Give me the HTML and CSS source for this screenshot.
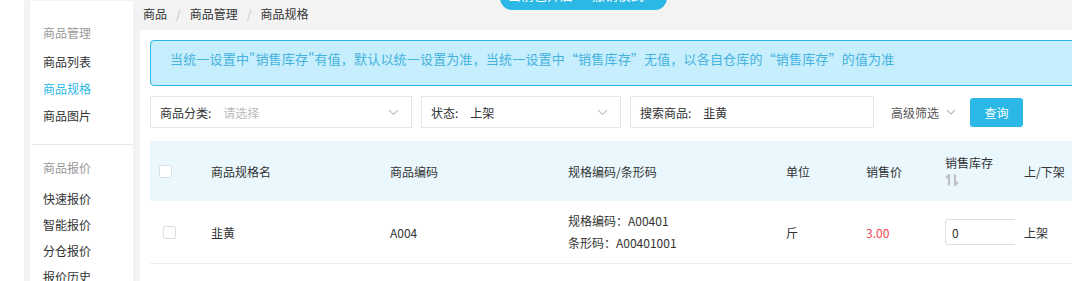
FILE: index.html
```html
<!DOCTYPE html>
<html lang="zh-CN">

<head>
    <meta charset="UTF-8">
    <meta name="viewport" content="width=device-width, initial-scale=1.0">
    <title>商品规格</title>
    <link rel="stylesheet" href="styles.css">
</head>

<body>

    <div class="toast">当前已开启 · 撤销模式</div>

    <div class="layout">
        <div class="rail"></div>

        <div class="sidebar">
            <div class="menu-group first">
                <div class="menu-title">商品管理</div>
                <a href="#" class="menu-item">商品列表</a>
                <a href="#" class="menu-item active">商品规格</a>
                <a href="#" class="menu-item">商品图片</a>
            </div>
            <div class="menu-group second">
                <div class="menu-title">商品报价</div>
                <a href="#" class="menu-item">快速报价</a>
                <a href="#" class="menu-item">智能报价</a>
                <a href="#" class="menu-item">分仓报价</a>
                <a href="#" class="menu-item">报价历史</a>
            </div>
        </div>

        <div class="main">
            <div class="breadcrumb">
                <span>商品</span><span class="sep">/</span><span>商品管理</span><span class="sep">/</span><span>商品规格</span>
            </div>

            <div class="panel">
                <div class="alert">当统一设置中"销售库存"有值，默认以统一设置为准，当统一设置中“销售库存”无值，以各自仓库的“销售库存”的值为准</div>

                <div class="filters">
                    <div class="field w-cat">
                        <span class="label">商品分类:</span>
                        <span class="placeholder">请选择</span>
                        <svg class="chevron" width="11" height="7" viewBox="0 0 11 7"><path d="M1 1l4.5 4.5L10 1" fill="none" stroke="#c0c4cc" stroke-width="1.1"/></svg>
                    </div>
                    <div class="field w-status">
                        <span class="label">状态:</span>
                        <span class="value">上架</span>
                        <svg class="chevron" width="11" height="7" viewBox="0 0 11 7"><path d="M1 1l4.5 4.5L10 1" fill="none" stroke="#c0c4cc" stroke-width="1.1"/></svg>
                    </div>
                    <div class="field w-search">
                        <span class="label">搜索商品:</span>
                        <span class="value">韭黄</span>
                    </div>
                    <div class="advanced">
                        高级筛选
                        <svg width="10" height="6" viewBox="0 0 10 6"><path d="M1 1l4 4 4-4" fill="none" stroke="#b4b8bf" stroke-width="1.1"/></svg>
                    </div>
                    <button class="btn-query">查询</button>
                </div>

                <div class="table">
                    <div class="tr thead">
                        <div class="td col-check"><span class="checkbox"></span></div>
                        <div class="td">商品规格名</div>
                        <div class="td">商品编码</div>
                        <div class="td">规格编码/条形码</div>
                        <div class="td">单位</div>
                        <div class="td">销售价</div>
                        <div class="td stock-head">
                            <span>销售库存</span>
                            <svg width="15" height="12" viewBox="0 0 15 12"><path d="M4 11.5V1L1 4M10 0.5V11l3-3" fill="none" stroke="#bdc0c5" stroke-width="2.2"/></svg>
                        </div>
                        <div class="td">上/下架</div>
                    </div>
                    <div class="tr tbody">
                        <div class="td col-check row-check"><span class="checkbox"></span></div>
                        <div class="td">韭黄</div>
                        <div class="td">A004</div>
                        <div class="td codes">
                            <span>规格编码：A00401</span>
                            <span>条形码：A00401001</span>
                        </div>
                        <div class="td">斤</div>
                        <div class="td price">3.00</div>
                        <div class="td"><div class="stock-cell"><input class="stock-input" type="text" value="0"></div></div>
                        <div class="td">上架</div>
                    </div>
                </div>
            </div>
        </div>
    </div>

</body>

</html>
```

FILE: styles.css
```css
* {
    box-sizing: border-box;
}

body {
    margin: 0;
    background-color: #f3f3f3;
    font-family: "Noto Sans CJK SC", "Noto Sans", sans-serif;
    font-size: 12px;
    color: #333;
    overflow: hidden;
}

.toast {
    position: absolute;
    top: -22px;
    left: 500px;
    width: 167px;
    height: 32px;
    border-radius: 12px;
    background-color: #2cb8e5;
    color: #fff;
    font-size: 13px;
    line-height: 33px;
    padding-left: 8px;
}

.layout {
    display: flex;
    height: 281px;
}

.rail {
    width: 24px;
    background-color: #fff;
    margin-right: 6px;
}

.sidebar {
    width: 103px;
    background-color: #fff;
    margin-top: 1px;
    margin-right: 7px;
}

.menu-group {
    padding-left: 13px;
}

.menu-group.first {
    padding-top: 18px;
    padding-bottom: 15px;
    border-bottom: 1px solid #e8e8e8;
    margin-left: 2px;
    padding-left: 11px;
}

.menu-group.second {
    padding-top: 9px;
}

.menu-title {
    line-height: 27px;
    color: #999;
    margin-bottom: 2px;
}

.second .menu-title {
    margin-bottom: 5px;
}

.menu-item {
    display: block;
    text-decoration: none;
    color: #333;
    line-height: 27px;
}

.second .menu-item {
    line-height: 26px;
}

.menu-item.active {
    color: #2db7e5;
}

.main {
    flex: 1;
    min-width: 0;
    display: flex;
    flex-direction: column;
}

.breadcrumb {
    height: 30px;
    line-height: 28px;
    padding-left: 3px;
    color: #333;
}

.breadcrumb .sep {
    color: #c0c4cc;
    margin: 0 9px;
}

.panel {
    flex: 1;
    background-color: #fff;
    padding: 10px 0 0 10px;
    overflow: hidden;
}

.alert {
    width: 960px;
    height: 46px;
    border: 1px solid #2bb8e6;
    border-radius: 4px;
    background-color: #c6eefc;
    color: #45b2de;
    font-size: 13px;
    letter-spacing: 0.18px;
    line-height: 20px;
    padding: 8px 19px;
}

.filters {
    display: flex;
    align-items: center;
    margin-top: 10px;
    height: 32px;
}

.field {
    display: flex;
    align-items: center;
    height: 32px;
    border: 1px solid #e3e6eb;
    padding: 0 12px 0 9px;
    margin-right: 9px;
}

.w-cat {
    width: 262px;
}

.w-status {
    width: 200px;
}

.w-search {
    width: 244px;
    margin-right: 17px;
}

.field .label {
    margin-right: 12px;
}

.placeholder {
    color: #bbb;
}

.chevron {
    margin-left: auto;
}

.advanced {
    display: flex;
    align-items: center;
    gap: 7px;
    color: #555;
    margin-right: 14px;
}

.btn-query {
    width: 53px;
    height: 29px;
    border: none;
    border-radius: 3px;
    background-color: #2bb8e6;
    color: #fff;
    font-family: inherit;
    font-size: 12px;
    padding: 0;
}

.table {
    margin-top: 13px;
    width: 1000px;
}

.tr {
    display: grid;
    grid-template-columns: 61px 179px 178px 218px 80px 79px 79px 126px;
    align-items: center;
}

.thead {
    height: 60px;
    background-color: #eaf8fd;
}

.tbody {
    height: 63px;
    border-bottom: 1px solid #ebeef5;
}

.td {
    overflow: hidden;
    white-space: nowrap;
}

.col-check {
    padding-left: 9px;
    display: flex;
}

.row-check {
    padding-left: 13px;
}

.checkbox {
    display: block;
    width: 13px;
    height: 13px;
    border: 1px solid #dcdfe6;
    border-radius: 2px;
    background-color: #fff;
}

.stock-head {
    display: flex;
    flex-direction: column;
    gap: 3px;
    margin-top: -2px;
}

.codes {
    display: flex;
    flex-direction: column;
    line-height: 22px;
}

.price {
    color: #f5414f;
}

.stock-cell {
    width: 70px;
    height: 26px;
    overflow: hidden;
}

.stock-input {
    width: 90px;
    height: 26px;
    border: 1px solid #dcdfe6;
    border-radius: 3px;
    padding: 0 6px;
    font-family: inherit;
    font-size: 12px;
    color: #333;
    outline: none;
}
```
